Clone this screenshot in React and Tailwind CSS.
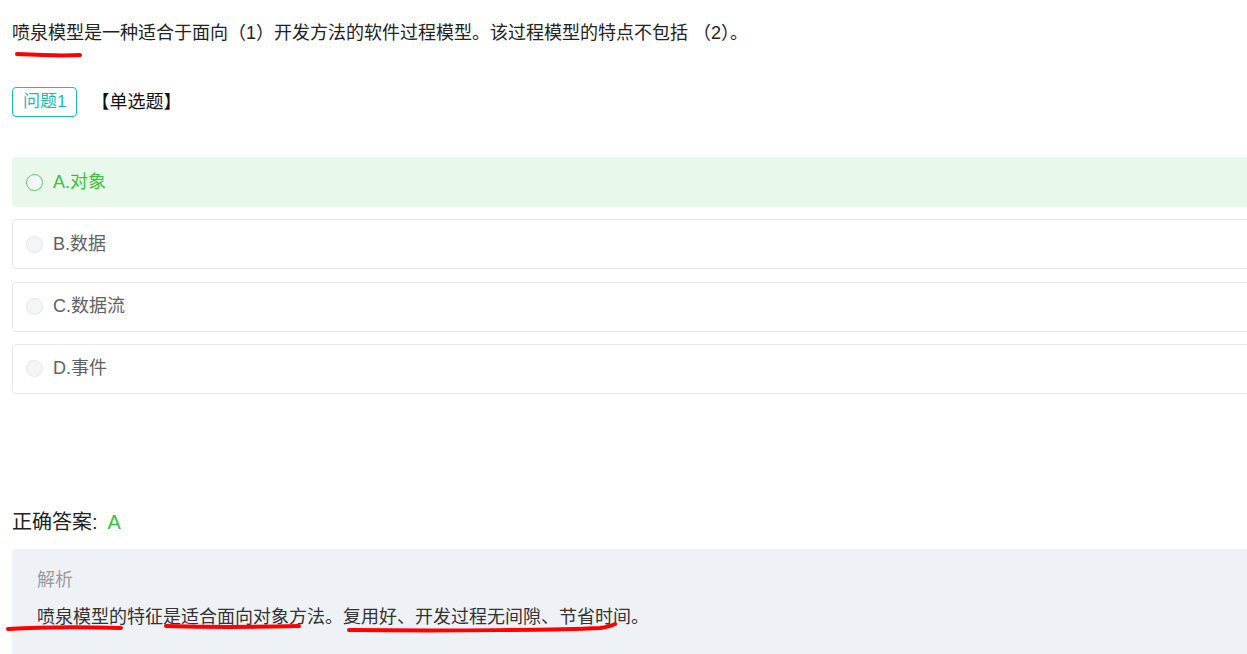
import React from 'react';

const FONT = { fontFamily: '"Liberation Sans", "Noto Sans CJK SC", sans-serif' };

const options = [
  { key: 'A', label: 'A.对象', correct: true },
  { key: 'B', label: 'B.数据' },
  { key: 'C', label: 'C.数据流' },
  { key: 'D', label: 'D.事件' },
];

function Option({ label, correct }) {
  return (
    <div
      className={
        correct
          ? 'flex items-center h-[50px] w-[1260px] rounded-[4px] bg-[#e8f8ea] px-[14px]'
          : 'flex items-center h-[50px] w-[1260px] rounded-[4px] border border-[#e6e8ef] bg-white px-[13px]'
      }
    >
      <span
        className={
          correct
            ? 'w-[17px] h-[17px] rounded-full border border-[#55cc5f] bg-[#f5f7fa]'
            : 'w-[17px] h-[17px] rounded-full border border-[#e4e7ed] bg-[#f3f5f9]'
        }
      />
      <span className={correct ? 'ml-[10px] text-[18px] text-[#35c23f]' : 'ml-[10px] text-[18px] text-[#5f6266]'}>
        {label}
      </span>
    </div>
  );
}

export default function App() {
  return (
    <div className="w-[1247px] h-[654px] overflow-hidden bg-white text-[#222]" style={FONT}>
      <div className="pl-[12px] pt-[20px]">
        {/* question */}
        <p className="relative text-[18px] leading-[27px]">
          喷泉模型是一种适合于面向（1）开发方法的软件过程模型。该过程模型的特点不包括 （2）。
          <svg className="absolute left-0 top-[28px] pointer-events-none" width="80" height="12">
            <path d="M5 6 C 25 7, 50 8, 68 7" stroke="#f00" strokeWidth="4" strokeLinecap="round" fill="none" />
          </svg>
        </p>

        <div className="mt-[40px] flex items-center h-[30px]">
          <span className="h-[30px] flex items-center px-[10px] rounded-[4px] border border-[#1bbdb3] text-[#1bbdb3] text-[17px]">
            问题1
          </span>
          <span className="ml-[14px] text-[18px] text-[#111]">【单选题】</span>
        </div>

        <div className="mt-[40px] flex flex-col gap-[12.3px]">
          {options.map((o) => (
            <Option key={o.key} {...o} />
          ))}
        </div>

        <div className="mt-[114px] text-[20px] leading-[28px] flex items-center">
          <span className="text-[#222]">正确答案:</span>
          <span className="ml-[10px] text-[#35c23f]">A</span>
        </div>

        <div className="mt-[13px] w-[1260px] h-[140px] rounded-[4px] bg-[#eef1f6] px-[25px] pt-[18px]">
          <div className="text-[18px] leading-[27px] text-[#9a9a9a]">解析</div>
          <p className="relative mt-[10px] text-[18px] leading-[27px] text-[#333]">
            喷泉模型的特征是适合面向对象方法。复用好、开发过程无间隙、节省时间。
            <svg className="absolute left-[-37px] top-0 pointer-events-none" width="700" height="40">
              <path d="M8 25 C 40 23, 90 23, 121 24" stroke="#f00" strokeWidth="4" strokeLinecap="round" fill="none" />
              <path d="M166 22 C 200 23, 260 23, 299 22" stroke="#f00" strokeWidth="4" strokeLinecap="round" fill="none" />
              <path d="M349 26 C 450 27, 560 26, 600 24 C 608 23, 613 21, 615 20" stroke="#f00" strokeWidth="4" strokeLinecap="round" fill="none" />
            </svg>
          </p>
        </div>
      </div>
    </div>
  );
}
